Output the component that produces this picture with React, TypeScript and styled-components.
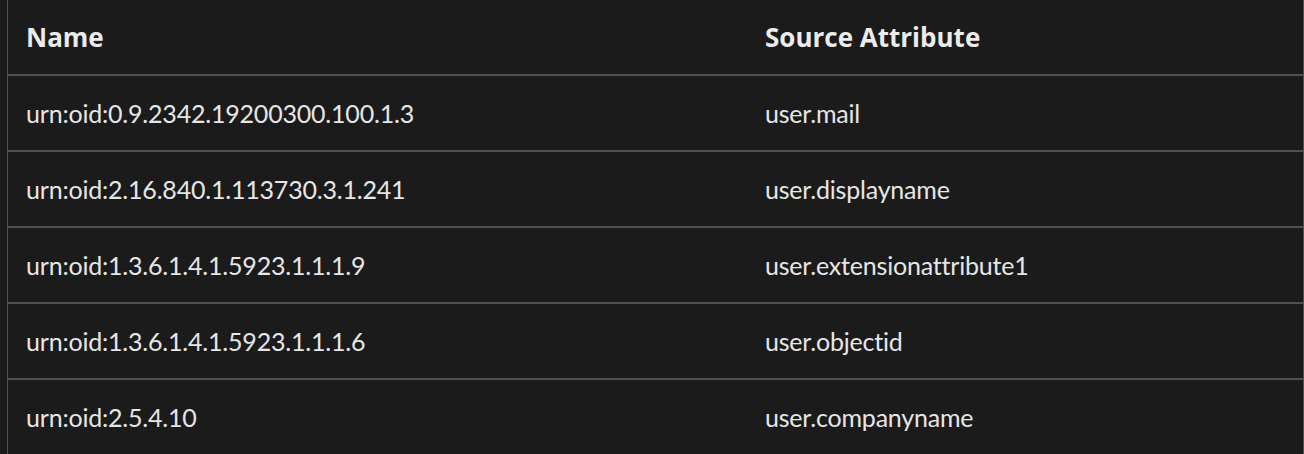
import React from "react";
import styled, { createGlobalStyle } from "styled-components";

const Global = createGlobalStyle`
  html, body {
    margin: 0;
    padding: 0;
    background: #1b1b1b;
  }
`;

const Table = styled.div`
  margin-left: 7px;
  width: 1297px;
  height: 454px;
  box-sizing: border-box;
  border-left: 1px solid #505050;
  border-right: 1px solid #505050;
  background: #1b1b1b;
  color: #e6e6e6;
  overflow: hidden;
`;

const Row = styled.div<{ $header?: boolean }>`
  display: grid;
  grid-template-columns: 739px 1fr;
  height: ${(p) => (p.$header ? 74 : 76)}px;
  box-sizing: border-box;
  border-top: ${(p) => (p.$header ? "none" : "2px solid #505050")};
  align-items: center;
`;

const Cell = styled.div`
  padding-left: 18px;
  white-space: nowrap;
  font-family: "Lato", "Open Sans", sans-serif;
  font-size: 25px;
  letter-spacing: -0.2px;
  font-weight: 400;
  line-height: 30px;
`;

const HeadCell = styled.div`
  padding-left: 18px;
  white-space: nowrap;
  font-family: "Open Sans", "Noto Sans", sans-serif;
  font-size: 26px;
  font-weight: 700;
  line-height: 30px;
  color: #ececec;
`;

const rows = [
  ["urn:oid:0.9.2342.19200300.100.1.3", "user.mail"],
  ["urn:oid:2.16.840.1.113730.3.1.241", "user.displayname"],
  ["urn:oid:1.3.6.1.4.1.5923.1.1.1.9", "user.extensionattribute1"],
  ["urn:oid:1.3.6.1.4.1.5923.1.1.1.6", "user.objectid"],
  ["urn:oid:2.5.4.10", "user.companyname"],
];

export default function App() {
  return (
    <>
      <Global />
      <Table>
        <Row $header>
          <HeadCell>Name</HeadCell>
          <HeadCell>Source Attribute</HeadCell>
        </Row>
        {rows.map(([n, s]) => (
          <Row key={n}>
            <Cell>{n}</Cell>
            <Cell>{s}</Cell>
          </Row>
        ))}
      </Table>
    </>
  );
}
